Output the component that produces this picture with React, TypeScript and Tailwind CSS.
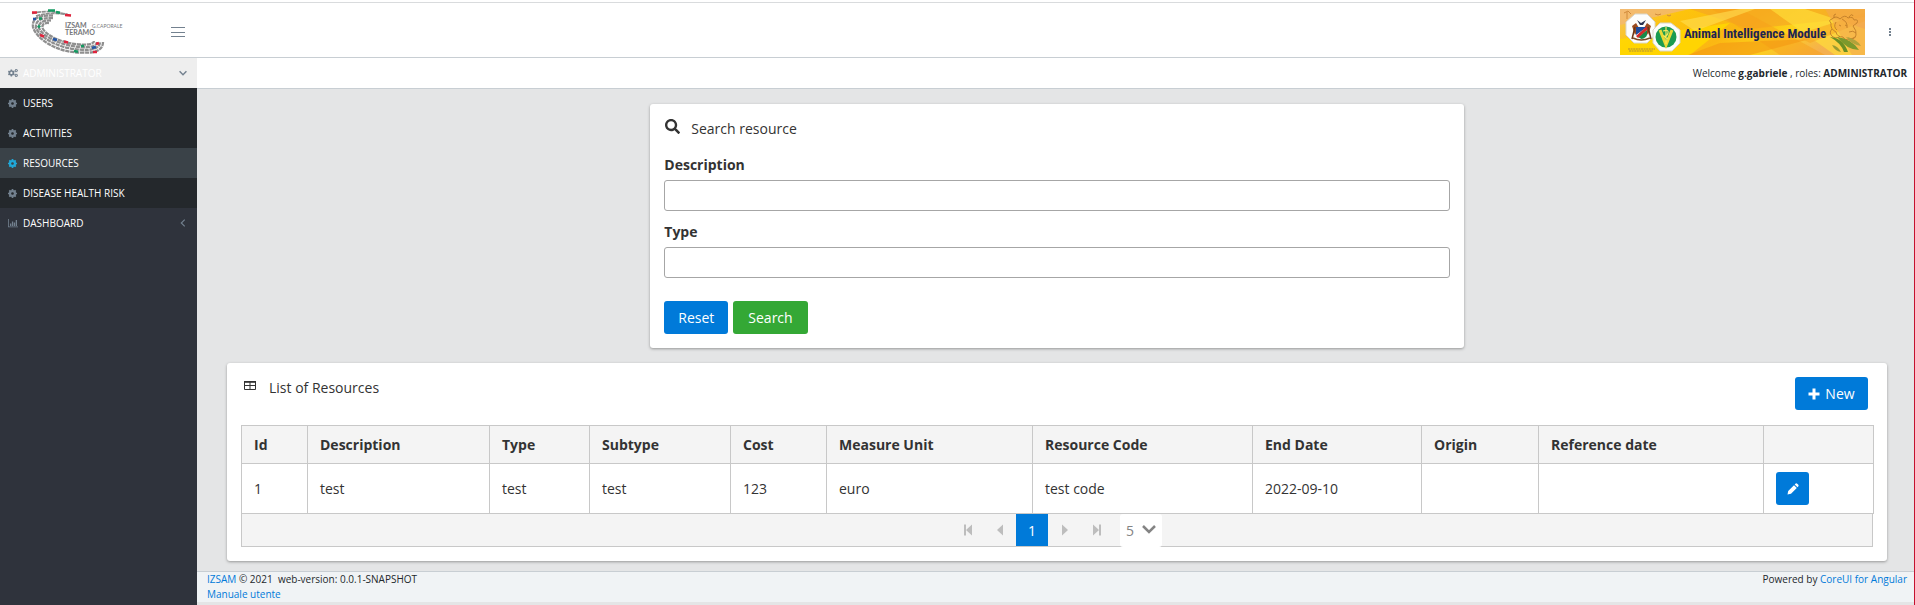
import type { ReactNode } from "react";
import { FaCogs, FaSearch } from "react-icons/fa";

function InstituteLogo() {
  return (
    <svg viewBox="0 0 92 46" className="h-[46px] w-[92px]" role="img" aria-label="IZSAM G. Caporale Teramo">
      <g fill="none" stroke="#8f8f8f" strokeWidth="2.3" strokeDasharray="4.200 0.7">
        <path d="M1 4.500Q18 0 38 6" strokeWidth="1.700" />
        <path d="M5 7Q22 2 40 6.500" strokeWidth="1.700" />
        <path d="M22 6.500C6 6 1 10 2 18C5 29 24 43 48 43.500C63 44.500 72 42 72 33" />
        <path d="M22 9C9 8.500 4 12 5 19C9 29 28 39.500 49 40.700C61 42 69 39 69 33" />
        <path d="M20 11.500C12 11 7 14 8 19C12 28 30 36.500 49 38C59 39 66 37 66 33" />
        <path d="M18 14C13 13.500 10 16 12 20C17 28 33 34.500 49 35.500C57 36 63 35 63 32" />
      </g>
      <g fill="none" strokeWidth="2.600">
        <path d="M1 3.500h5M34 6l6 .5" stroke="#e0243d" />
        <path d="M17 1.500h7M25 3l4 .7" stroke="#159a62" />
        <path d="M2 10h3" stroke="#2456a8" />
        <path d="M8 9.500h3M7 16.500l2 2M43 42l4 .7M50 37h3" stroke="#159a62" />
        <path d="M9 26l4 1.500M33 32.500l4 1M62 43h4M65 35l3-1" stroke="#e0243d" />
        <path d="M22 30l4 1M61 39l4-1" stroke="#2456a8" />
      </g>
      <g fill="#77787b" fontFamily="Lato, 'Open Sans', sans-serif">
        <text x="34" y="19" fontSize="7" fontWeight="700">IZSAM</text>
        <text x="61" y="19" fontSize="5">G.CAPORALE</text>
        <text x="34" y="25.500" fontSize="7" fontWeight="700">TERAMO</text>
      </g>
    </svg>
  );
}

function ModuleBanner() {
  return (
    <svg viewBox="0 0 245 46" className="h-[46px] w-[245px]" role="img" aria-label="Animal Intelligence Module">
      <defs>
        <linearGradient id="sun" x1="0" x2="1" y1="0" y2="0.3">
          <stop offset="0" stopColor="#f6c66a" />
          <stop offset="0.25" stopColor="#fdc40c" />
          <stop offset="0.55" stopColor="#fbb713" />
          <stop offset="0.75" stopColor="#fdd21a" />
          <stop offset="1" stopColor="#f5b04f" />
        </linearGradient>
      </defs>
      <rect width="245" height="46" fill="url(#sun)" />
      <path d="M0 0H70L0 16Z" fill="#f2b873" opacity=".8" />
      <path d="M70 0L130 20L245 8V0Z" fill="#f5a623" opacity=".7" />
      <path d="M92 0L160 46H205L120 0Z" fill="#f7a01a" opacity=".5" />
      <path d="M0 30L110 14L70 46H0Z" fill="#ffd800" opacity=".85" />
      <path d="M68 46L100 34L190 30L130 46Z" fill="#f59a14" opacity=".65" />
      <path d="M150 0L215 46H245V20L185 0Z" fill="#ffe13a" opacity=".65" />
      <path d="M175 26L245 4V12L190 34Z" fill="#f7a21b" opacity=".5" />
      <path d="M205 0H245V46H232Z" fill="#f3a94f" opacity=".6" />
      <path d="M60 12L120 0H135L75 22Z" fill="#ffdf52" opacity=".6" />
      <path d="M4 4l4-2 3 3M7 3v7M35 5l3 1 3-1M47 6l2 1 2-1" stroke="#d08a3b" fill="none" strokeWidth="1" />

      <path d="M15 5L27 5L35 13V26L27 34H14L6 26V13Z" fill="#fdfdfb" stroke="#d9d6ca" />
      <path d="M12 17l4-3 3 5-4 7zM31 17l-4-3-3 5 4 7z" fill="#9b4b1f" />
      <path d="M12 30l3-12M31 30l-3-12" stroke="#6b3517" strokeWidth="1.500" />
      <path d="M16 18h11v7q-1 4-5.500 5q-4.500-1-5.500-5z" fill="#fff" />
      <path d="M16 18h11L16 26z" fill="#1e4b9c" />
      <path d="M27 21v5q-1 3-5.500 4L18 28z" fill="#188a49" />
      <path d="M16 27L26 18h1v3l-9 8z" fill="#d22b2b" />
      <path d="M17 11l4 3 5-3-3 5h-3z" fill="#2b3350" />
      <path d="M13 29q8 4 17 0" fill="none" stroke="#7b4a22" strokeWidth="1.500" />
      <path d="M8 40h27M9 42h24" stroke="#8c7350" strokeWidth="1.200" strokeDasharray="2 .6" opacity=".7" />

      <path d="M40 14H51L60 21V34L52 42H40L33 34V21Z" fill="#fdfdfb" stroke="#d9d6ca" />
      <circle cx="46" cy="28" r="10.500" fill="#1c9b50" />
      <path d="M40 21L46 36L52 21" fill="none" stroke="#e9d835" strokeWidth="3" />
      <path d="M46 18v17M43 22q6-2 5 2t-4 3q2 3 4 2" fill="none" stroke="#f7e95c" strokeWidth="1.200" />

      <text x="64" y="29" fontWeight="700" fill="#1d2452" fontFamily="'Liberation Sans Narrow', 'Roboto Condensed', 'Liberation Sans', sans-serif" className="text-[13px]">
        Animal Intelligence Module
      </text>

      <g fill="none" stroke="#c07d28" strokeWidth=".9">
        <path d="M211 14q-3-3 1-4q4-4 8 0q5-5 8-1q5-2 6 2q5-1 3 3q-3 2-4 3q4 5 3 9q-1 5-6 4q-5 2-7-2q-6 0-7-5q-6-3-5-9z" />
        <path d="M216 13q-3 5 1 8M222 10q6 3 5 9M214 9q-1-4 2-4M229 8q3-4 4-1M229 23q4-2 7 1M228 29q4 2 7-1M219 16l2 1M225 16l2 1M212 20q-4 4 1 8q5 2 7-1" />
      </g>
      <path d="M210 28q13 1 18 15h-4q-3-9-14-15z" fill="#6a8f24" />
      <path d="M217 28q15 2 22 13q-12 0-22-13z" fill="#7c992c" />
      <path d="M226 28q11 2 15 9q-9-1-15-9z" fill="#b1a23b" />
      <path d="M212 36q6 1 9 7q-6-1-9-7z" fill="#9a9b31" />
    </svg>
  );
}

function Chevron({ className, d, weight }: { className: string; d: string; weight: number }) {
  return (
    <svg viewBox="0 0 14 14" className={className} fill="none" stroke="currentColor" strokeWidth={weight} aria-hidden="true">
      <path d={d} />
    </svg>
  );
}

function Cog({ className }: { className: string }) {
  return (
    <svg viewBox="0 0 16 16" className={className} fill="none" stroke="currentColor" aria-hidden="true">
      <circle cx="8" cy="8" r="4.400" strokeWidth="4" />
      <path d="M8 0v3M8 13v3M0 8h3M13 8h3M2.300 2.300l2.200 2.200M11.500 11.500l2.200 2.200M2.300 13.700l2.200-2.200M11.500 4.500l2.200-2.200" strokeWidth="3" />
    </svg>
  );
}

function NavItem({ label, active = false }: { label: string; active?: boolean }) {
  return (
    <a href="#" className={`flex h-[30px] items-center gap-[6px] pl-2 text-[10px] text-white ${active ? "bg-[#3a4248]" : "bg-[#24282c]"}`}>
      <Cog className={`size-[9px] ${active ? "text-[#20a8d8]" : "text-[#73818f]"}`} />
      {label}
    </a>
  );
}

function Field({ id, label, className }: { id: string; label: string; className: string }) {
  return (
    <div className={className}>
      <label htmlFor={id} className="block leading-[21px] font-bold">{label}</label>
      <input id={id} type="text" className="mt-[5px] block h-[31px] w-full rounded-[3px] border border-[#a6a6a6] bg-white px-2 outline-none" />
    </div>
  );
}

function PageButton({ label, children }: { label: string; children: ReactNode }) {
  return (
    <button type="button" aria-label={label} className="flex h-8 w-8 items-center justify-center text-[#bdbdbd]">
      <svg viewBox="0 0 12 12" className="size-3" fill="currentColor">{children}</svg>
    </button>
  );
}

const columns = [
  { title: "Id", value: "1", width: "w-[66px]" },
  { title: "Description", value: "test", width: "w-[182px]" },
  { title: "Type", value: "test", width: "w-[100px]" },
  { title: "Subtype", value: "test", width: "w-[141px]" },
  { title: "Cost", value: "123", width: "w-[96px]" },
  { title: "Measure Unit", value: "euro", width: "w-[206px]" },
  { title: "Resource Code", value: "test code", width: "w-[220px]" },
  { title: "End Date", value: "2022-09-10", width: "w-[169px]" },
  { title: "Origin", value: "", width: "w-[117px]" },
  { title: "Reference date", value: "", width: "w-[225px]" },
];

const card = "rounded-[3px] bg-white shadow-[0_1px_3px_rgba(0,0,0,0.35)]";
const button = "h-[33px] rounded-[3px] text-white";

export default function App() {
  return (
    <div className="flex min-h-screen flex-col border-r border-[#c4122f] bg-[#e4e5e6] font-['Open_Sans','Noto_Sans',sans-serif] text-[14px] text-[#333333]">
      <header className="border-b border-[#c8ced3] bg-white pt-[2px]">
        <div className="flex h-[55px] items-center border-t border-[#d9dbdd] pt-[3px] pr-[22px] pl-[31px]">
          <InstituteLogo />
          <button type="button" aria-label="Toggle sidebar" className="ml-12 text-[#73818f]">
            <svg viewBox="0 0 14 12" className="h-3 w-[14px]" stroke="currentColor" strokeWidth="1">
              <path d="M0 1.500h14M0 6.500h14M0 10.500h14" />
            </svg>
          </button>
          <div className="ml-auto"><ModuleBanner /></div>
          <button type="button" aria-label="More" className="ml-6 text-[#73818f]">
            <svg viewBox="0 0 3 10" className="h-[10px] w-[3px]" fill="currentColor">
              <path d="M0 1h2v2H0zM0 4h2v2H0zM0 7h2v2H0z" />
            </svg>
          </button>
        </div>
      </header>

      <div className="flex grow">
        <nav className="w-[197px] shrink-0 bg-[#2f333c]">
          <a href="#" className="flex h-[30px] items-center gap-[5px] bg-[#eeeeee] pr-[10px] pl-2 text-[10px] text-white">
            <FaCogs className="size-[10px] text-[#73818f]" />
            ADMINISTRATOR
            <Chevron className="ml-auto size-2 text-[#73818f]" d="M1 4l6 6 6-6" weight={2.5} />
          </a>
          <NavItem label="USERS" />
          <NavItem label="ACTIVITIES" />
          <NavItem label="RESOURCES" active />
          <NavItem label="DISEASE HEALTH RISK" />
          <a href="#" className="flex h-[30px] items-center gap-[5px] pr-[10px] pl-2 text-[10px] text-white">
            <svg viewBox="0 0 10 10" className="size-[10px] text-[#73818f]" fill="currentColor" aria-hidden="true">
              <path d="M0 1h.8v7.500H10v.8H0zM2 5.500h1.300V8H2zM3.900 3.500h1.300V8H3.900zM5.800 4.500h1.300V8H5.800zM7.700 2H9v6H7.700z" />
            </svg>
            DASHBOARD
            <Chevron className="ml-auto size-2 text-[#73818f]" d="M10 1L4 7l6 6" weight={2} />
          </a>
        </nav>

        <div className="flex min-w-0 grow flex-col">
          <div className="h-[31px] border-b border-[#c8ced3] bg-white pr-[7px] text-right text-[10px] leading-[30px] text-[#23282c]">
            Welcome <b>g.gabriele</b> , roles: <b>ADMINISTRATOR</b>
          </div>

          <main className="pt-[15px] pr-[27px] pb-[10px] pl-[30px]">
            <form className={`${card} mx-auto h-[244px] w-[49%] px-[14px] pt-[14px]`} onSubmit={(e) => e.preventDefault()}>
              <h2 className="flex h-[21px] items-center gap-[11px] pl-px">
                <FaSearch className="mb-1 size-[15px]" />
                Search resource
              </h2>
              <Field id="description" label="Description" className="mt-[15px]" />
              <Field id="type" label="Type" className="mt-[10px]" />
              <div className="mt-[23px] flex gap-[5px]">
                <button type="reset" className={`${button} bg-[#007ad9] px-[14px]`}>Reset</button>
                <button type="submit" className={`${button} bg-[#34a835] px-[15px]`}>Search</button>
              </div>
            </form>

            <section className={`${card} mt-[15px] p-[14px]`}>
              <div className="flex justify-between pr-[5px]">
                <h2 className="flex h-[21px] items-center">
                  <svg viewBox="0 0 12 9" className="mr-[13px] mb-1 ml-[3px] h-[9px] w-3" fill="none" stroke="currentColor">
                    <path d="M.5 1h11M.5 4.500h11M.5 8.500h11M.5.5v8M6 .5v8M11.500.5v8" />
                    <path d="M0 .8h12" strokeWidth="1.600" />
                  </svg>
                  List of Resources
                </h2>
                <button type="button" className={`${button} flex w-[73px] items-center justify-center gap-[5px] bg-[#007ad9]`}>
                  <svg viewBox="0 0 12 12" className="size-3" fill="currentColor" aria-hidden="true">
                    <path d="M4.500.5h3v4h4v3h-4v4h-3v-4h-4v-3h4z" />
                  </svg>
                  New
                </button>
              </div>

              <table className="mt-[15px] w-full table-fixed border-collapse text-left">
                <thead>
                  <tr className="h-[38px] bg-[#f4f4f4]">
                    {columns.map((c) => (
                      <th key={c.title} className={`${c.width} border border-[#c8c8c8] px-3 font-bold`}>{c.title}</th>
                    ))}
                    <th className="w-[110px] border border-[#c8c8c8]" aria-label="Actions" />
                  </tr>
                </thead>
                <tbody>
                  <tr className="h-[50px]">
                    {columns.map((c) => (
                      <td key={c.title} className="border border-[#c8c8c8] px-3">{c.value}</td>
                    ))}
                    <td className="border border-[#c8c8c8] px-3">
                      <button type="button" aria-label="Edit" className={`${button} flex w-[33px] items-center justify-center bg-[#007ad9]`}>
                        <svg viewBox="0 0 12 12" className="size-3" fill="currentColor">
                          <path d="M.5 11.500l.7-3.500L7 2.200 9.800 5 4 10.800zM7.700 1.500L8.700.6q.8-.5 1.500.1l1.100 1.100q.6.700.1 1.500l-.9 1z" />
                        </svg>
                      </button>
                    </td>
                  </tr>
                </tbody>
              </table>

              <div className="flex h-[33px] justify-center border border-t-0 border-[#c8c8c8] bg-[#f4f4f4]">
                <PageButton label="First page"><path d="M2 .5h2v11H2zM10 .5v11L4 6z" /></PageButton>
                <PageButton label="Previous page"><path d="M9 .5v11L3 6z" /></PageButton>
                <button type="button" aria-current="page" className="h-8 w-8 bg-[#007ad9] text-white">1</button>
                <PageButton label="Next page"><path d="M4 .5v11L10 6z" /></PageButton>
                <PageButton label="Last page"><path d="M3 .5v11L9 6zM9 .5h2v11H9z" /></PageButton>
                <div className="relative ml-2 h-[33px] w-[42px] rounded-[3px] bg-white text-[#848484]">
                  <select aria-label="Rows per page" className="h-full w-full appearance-none pl-[6px] outline-none">
                    <option>5</option>
                    <option>10</option>
                    <option>20</option>
                  </select>
                  <Chevron className="pointer-events-none absolute top-2 right-[6px] size-[14px]" d="M1 4l6 6 6-6" weight={2.5} />
                </div>
              </div>
            </section>
          </main>

          <footer className="mt-auto mb-[3px] flex justify-between border-t border-[#c8ced3] bg-[#f0f3f5] pr-[7px] pl-[10px] text-[10px] leading-[15px] text-[#23282c]">
            <div>
              <a href="#" className="text-[#007ad9]">IZSAM</a> © 2021 &nbsp;web-version: 0.0.1-SNAPSHOT
              <br />
              <a href="#" className="text-[#007ad9]">Manuale utente</a>
            </div>
            <div>
              Powered by <a href="#" className="text-[#007ad9]">CoreUI for Angular</a>
            </div>
          </footer>
        </div>
      </div>
    </div>
  );
}
